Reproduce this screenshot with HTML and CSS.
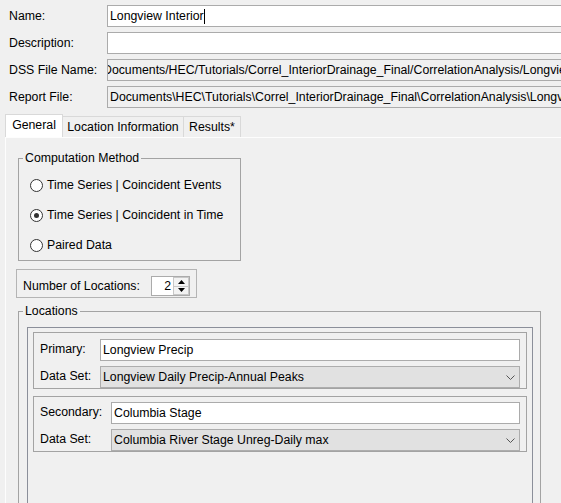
FILE: index.html
```html
<!DOCTYPE html>
<html>
<head>
<meta charset="utf-8">
<link rel="stylesheet" href="styles.css">
</head>
<body>
<div class="app">
  <div class="form">
    <div class="lbl">Name:</div>
    <div class="field">Longview Interior<span class="caret"></span></div>
    <div class="lbl">Description:</div>
    <div class="field"></div>
    <div class="lbl">DSS File Name:</div>
    <div class="field ro"><span class="shift">Documents/HEC/Tutorials/Correl_InteriorDrainage_Final/CorrelationAnalysis/Longview Interior.dss</span></div>
    <div class="lbl">Report File:</div>
    <div class="field ro">Documents\HEC\Tutorials\Correl_InteriorDrainage_Final\CorrelationAnalysis\Longview Interior.rpt</div>
  </div>

  <div class="tabs">
    <div class="tab sel t1">General</div>
    <div class="tab t2">Location Information</div>
    <div class="tab t3">Results*</div>
  </div>

  <div class="panel">
    <fieldset class="group comp">
      <legend>Computation Method</legend>
      <div class="radios">
        <div class="radio"><span class="dot"></span>Time Series | Coincident Events</div>
        <div class="radio on"><span class="dot"></span>Time Series | Coincident in Time</div>
        <div class="radio"><span class="dot"></span>Paired Data</div>
      </div>
    </fieldset>

    <div class="numloc">
      <span class="numlbl">Number of Locations:</span>
      <div class="spinner">
        <span class="val">2</span>
        <div class="arrows">
          <span class="btn"><svg width="7" height="4" viewBox="0 0 7 4"><path d="M3.5 0 L7 4 L0 4 Z" fill="#000"/></svg></span>
          <span class="btn"><svg width="7" height="4" viewBox="0 0 7 4"><path d="M0 0 L7 0 L3.5 4 Z" fill="#000"/></svg></span>
        </div>
      </div>
    </div>

    <fieldset class="group locs">
      <legend>Locations</legend>
      <div class="inner">
        <div class="locbox">
          <div class="llbl">Primary:</div>
          <div class="field">Longview Precip</div>
          <div class="llbl">Data Set:</div>
          <div class="combo"><span class="ctext">Longview Daily Precip-Annual Peaks</span><svg class="chev" width="9" height="5" viewBox="0 0 9 5"><path d="M0.5 0.5 L4.5 4.5 L8.5 0.5" fill="none" stroke="#555" stroke-width="1"/></svg></div>
        </div>
        <div class="locbox second">
          <div class="llbl">Secondary:</div>
          <div class="field">Columbia Stage</div>
          <div class="llbl">Data Set:</div>
          <div class="combo"><span class="ctext">Columbia River Stage Unreg-Daily max</span><svg class="chev" width="9" height="5" viewBox="0 0 9 5"><path d="M0.5 0.5 L4.5 4.5 L8.5 0.5" fill="none" stroke="#555" stroke-width="1"/></svg></div>
        </div>
      </div>
    </fieldset>
  </div>
</div>
</body>
</html>
```

FILE: styles.css
```css
html, body {
  margin: 0;
  padding: 0;
  overflow: hidden;
}
body {
  background: #f0f0f0;
  font-family: "Liberation Sans", Arial, sans-serif;
  font-size: 12.3px;
  color: #000;
  width: 561px;
  height: 503px;
}
.app {
  width: 640px;
}
.form {
  display: grid;
  grid-template-columns: 107px 520px;
  grid-auto-rows: 22px;
  row-gap: 5px;
  padding-top: 5px;
}
.lbl {
  padding-left: 9px;
  display: flex;
  align-items: center;
}
.field {
  box-sizing: border-box;
  height: 22px;
  border: 1px solid #ababab;
  background: #fff;
  padding-left: 2px;
  display: flex;
  align-items: center;
  white-space: nowrap;
  overflow: hidden;
}
.field.ro {
  background: #f0f0f0;
}
.shift {
  margin-left: -7px;
}
.caret {
  display: inline-block;
  width: 1px;
  height: 15px;
  background: #000;
}

/* tabs */
.tabs {
  display: flex;
  align-items: flex-end;
  margin-top: 6px;
  padding-left: 5px;
  height: 23px;
}
.tab {
  box-sizing: border-box;
  height: 21px;
  border: 1px solid #d9d9d9;
  border-bottom: none;
  background: #f0f0f0;
  display: flex;
  align-items: center;
  justify-content: center;
  white-space: nowrap;
}
.tab + .tab {
  border-left: none;
}
.tab.sel {
  height: 23px;
  background: #fff;
  padding-bottom: 2px;
}
.t1 { width: 58px; }
.t2 { width: 121px; }
.t3 { width: 57px; }

.panel {
  margin-left: 5px;
  border-left: 1px solid #fdfdfd;
  border-top: 1px solid #fdfdfd;
  height: 400px;
}

/* groups */
.group {
  margin: 0;
  padding: 0;
  border: 1px solid #a3a3a3;
  min-inline-size: 0;
  box-sizing: border-box;
}
.group > legend {
  padding: 0 2px;
  margin-left: 4px;
  line-height: 14px;
}
.comp {
  margin: 13px 0 0 12px;
  width: 223px;
}
.radios {
  display: flex;
  flex-direction: column;
  gap: 6px;
  padding: 8px 0 3px 11px;
}
.radio {
  display: flex;
  align-items: center;
  height: 24px;
  gap: 4px;
  white-space: nowrap;
}
.dot {
  box-sizing: border-box;
  width: 13px;
  height: 13px;
  border: 1px solid #333;
  border-radius: 50%;
  background: #fff;
  display: flex;
  align-items: center;
  justify-content: center;
}
.radio.on .dot::after {
  content: "";
  width: 5px;
  height: 5px;
  border-radius: 50%;
  background: #333;
}

/* number of locations */
.numloc {
  box-sizing: border-box;
  margin: 8px 0 0 10px;
  width: 181px;
  height: 29px;
  border: 1px solid #b4b4b4;
  padding: 6px 6px 1px 6px;
  display: flex;
  align-items: center;
  justify-content: space-between;
}
.spinner {
  box-sizing: border-box;
  width: 39px;
  height: 20px;
  border: 1px solid #ababab;
  background: #fff;
  display: flex;
  align-items: stretch;
}
.val {
  flex: 1;
  text-align: right;
  padding-right: 2px;
  display: flex;
  align-items: center;
  justify-content: flex-end;
}
.arrows {
  width: 16px;
  display: flex;
  flex-direction: column;
}
.btn {
  flex: 1;
  box-sizing: border-box;
  border: 1px solid #c8c8c8;
  background: #f3f3f3;
  display: flex;
  align-items: center;
  justify-content: center;
}
.btn + .btn {
  border-top: none;
}

/* locations */
.locs {
  margin: 6px 0 0 12px;
  width: 523px;
  height: 230px;
}
.inner {
  margin: 9px 7px 0 8px;
  border: 1px solid #8b8f9a;
  padding: 4px 5px;
  height: 200px;
  display: flex;
  flex-direction: column;
  gap: 7px;
}
.locbox {
  border: 1px solid #a3a3a3;
  padding: 6px 6px 0 6px;
  display: grid;
  grid-template-columns: 60px 1fr;
  grid-auto-rows: 22px;
  row-gap: 5px;
}
.locbox.second {
  padding-top: 5px;
  grid-template-columns: 71px 1fr;
}
.llbl {
  display: flex;
  align-items: center;
  padding-bottom: 2px;
  white-space: nowrap;
}
.locbox .field {
  padding-left: 2px;
}
.combo {
  box-sizing: border-box;
  height: 22px;
  border: 1px solid #adadad;
  background: #e1e1e1;
  padding-left: 2px;
  display: flex;
  align-items: center;
  justify-content: space-between;
  white-space: nowrap;
}
.chev {
  margin-right: 4px;
}
```
